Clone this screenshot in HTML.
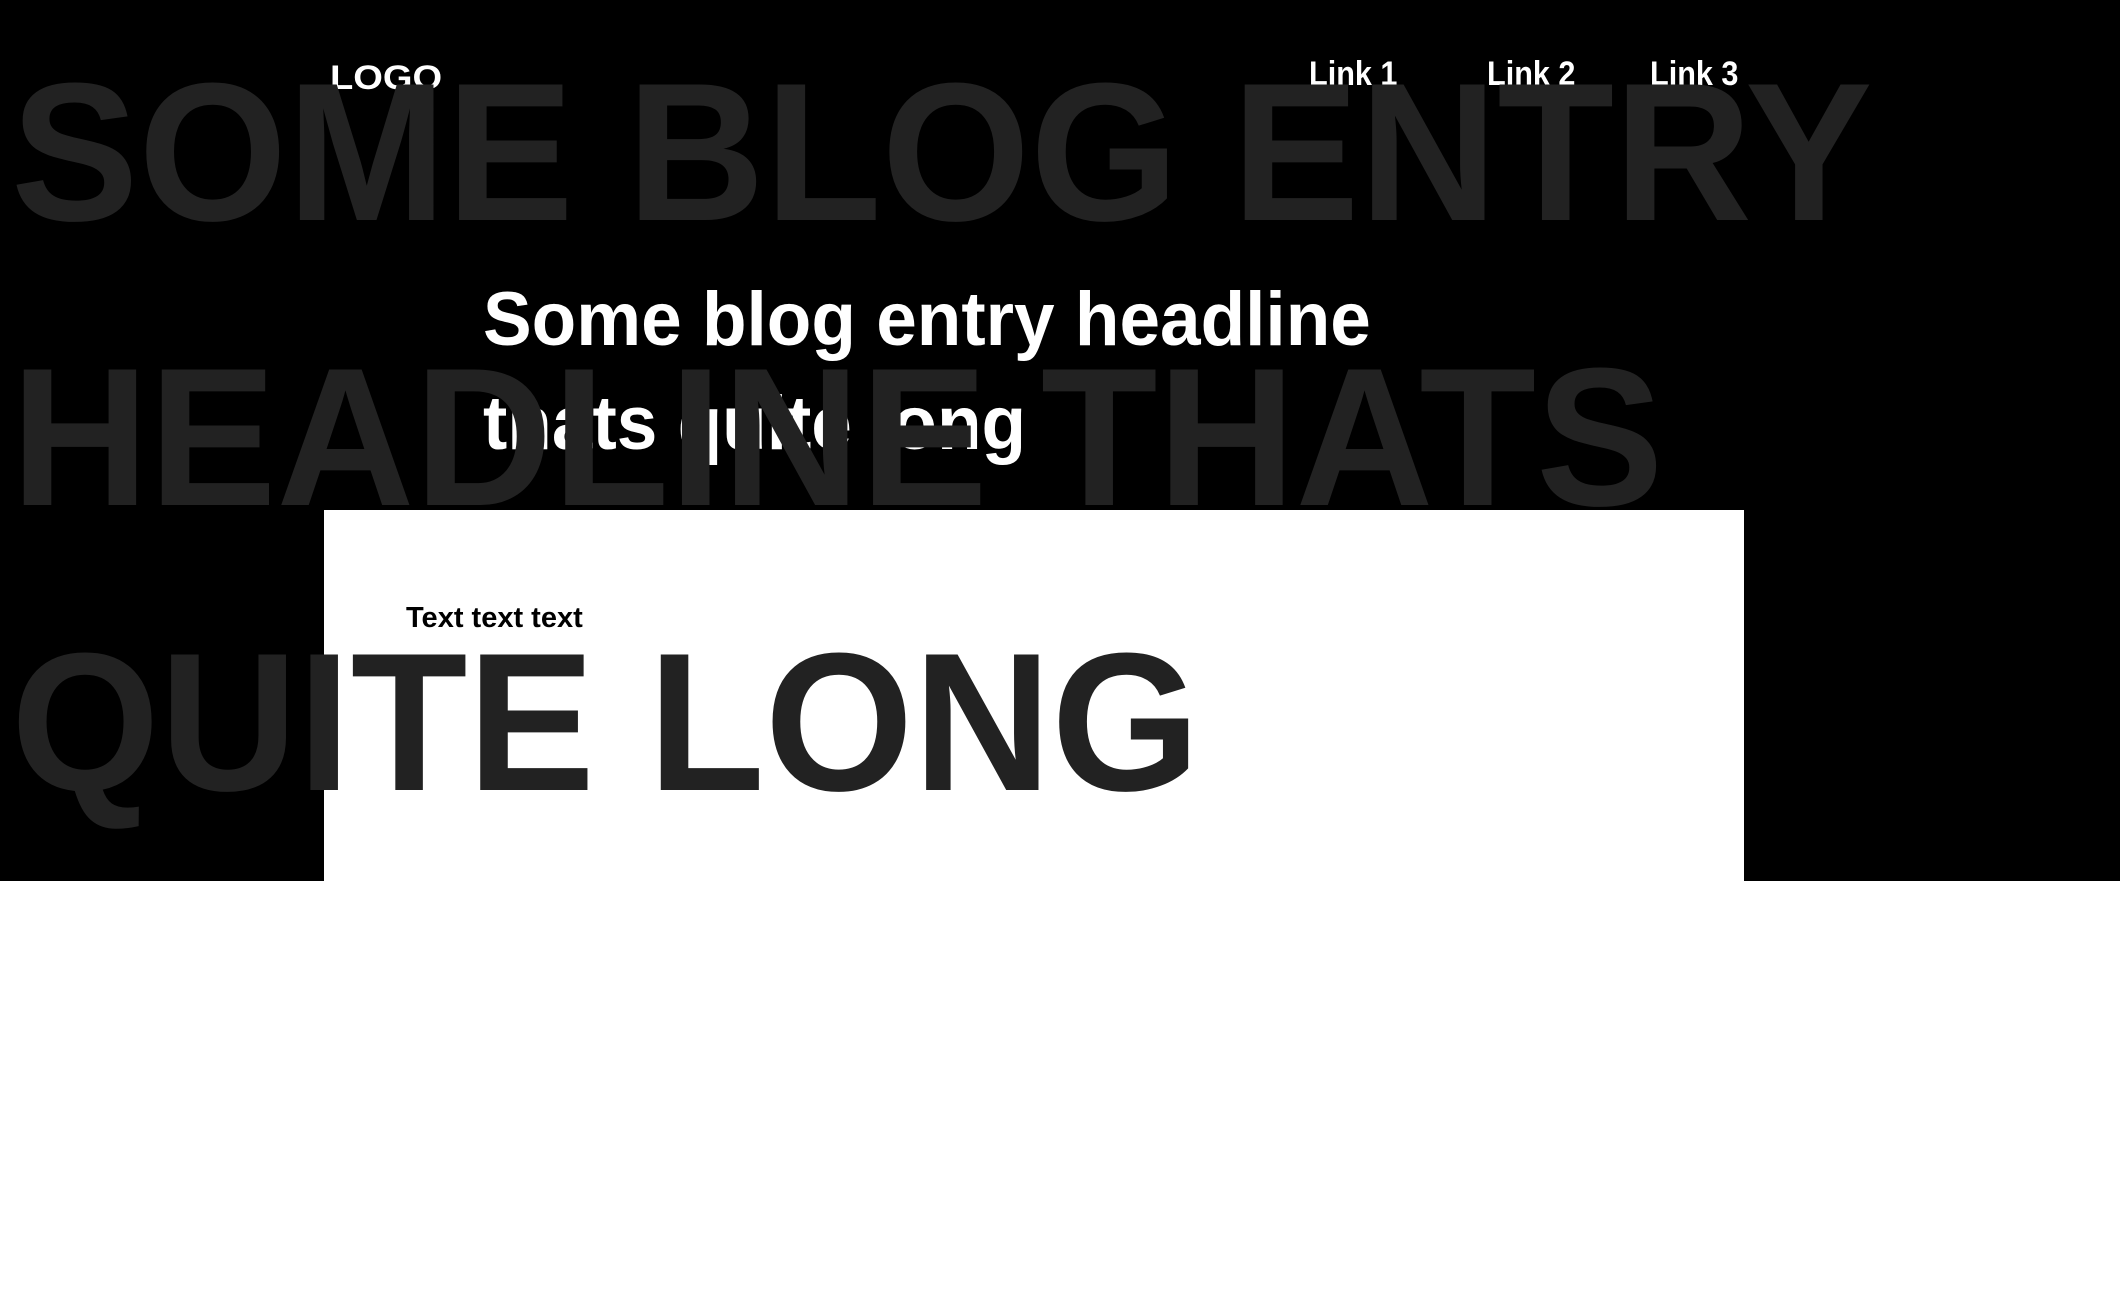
<!DOCTYPE html>
<html><head><meta charset="utf-8"><style>
html,body{margin:0;padding:0;width:2120px;height:1296px;overflow:hidden;background:#fff;font-family:"Liberation Sans",sans-serif;font-weight:bold}
.hero{position:absolute;left:0;top:0;width:2120px;height:881px;background:#000}
.box{position:absolute;left:324px;top:510px;width:1420px;height:371px;background:#fff}
.nav{position:absolute;color:#fff;font-size:34px;line-height:40px;transform:scaleX(.9);transform-origin:left top}
.sub{position:absolute;left:483px;top:268px;color:#fff;font-size:76px;line-height:104px;white-space:nowrap;transform:scaleX(.96);transform-origin:left top}
.big{position:absolute;left:11px;top:10px;color:#222;font-size:197px;line-height:285px;white-space:nowrap;transform:scaleX(.97);transform-origin:left top}
.txt{position:absolute;left:406px;top:598px;color:#000;font-size:29px;line-height:40px}
</style></head><body>
<div class="hero"></div>
<div class="nav" style="left:330px;top:58px;transform:scaleX(1.12)">LOGO</div>
<div class="nav" style="left:1309px;top:54px">Link 1</div>
<div class="nav" style="left:1487px;top:54px">Link 2</div>
<div class="nav" style="left:1650px;top:54px">Link 3</div>
<div class="sub">Some blog entry headline<br>thats quite long</div>
<div class="box"></div>
<div class="txt">Text text text</div>
<div class="big">SOME BLOG ENTRY<br>HEADLINE THATS<br>QUITE LONG</div>
</body></html>
